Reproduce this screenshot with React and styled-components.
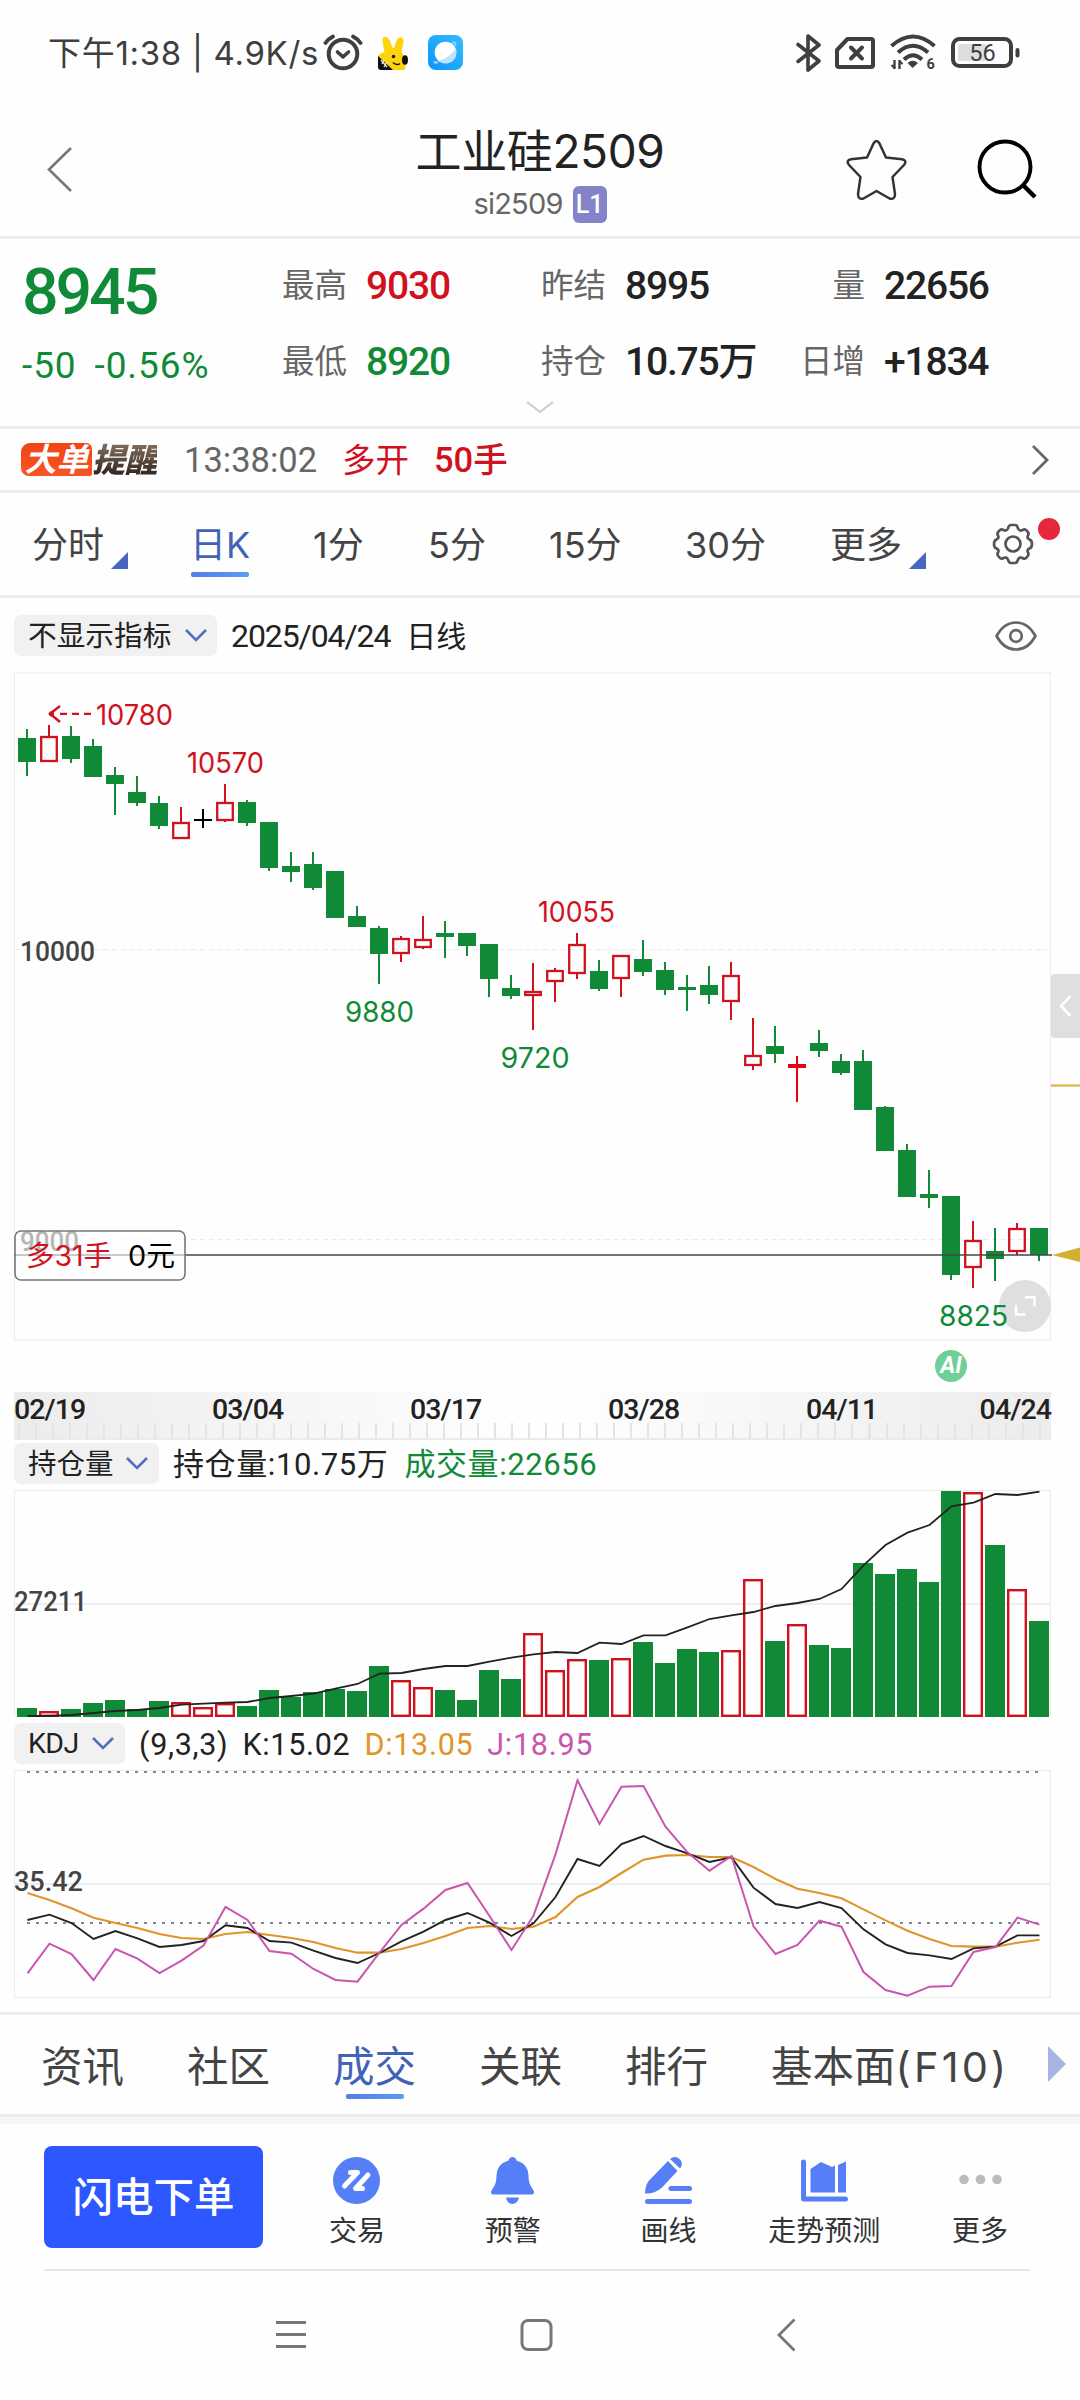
import React from "react";
import styled, { createGlobalStyle } from "styled-components";

const GREEN = "#118a38";
const RED = "#d0121f";
const INK = "#222";
const UI = '"Inter", "Noto Sans CJK SC", sans-serif';
const DIN = '"Roboto", "Noto Sans CJK SC", sans-serif';

const GlobalStyle = createGlobalStyle`
  * { box-sizing: border-box; }
  body { margin: 0; background: #fefefe; }
  svg { display: block; flex: none; }
`;

const Screen = styled.main`
  width: 1080px;
  height: 2400px;
  overflow: hidden;
  display: flex;
  flex-direction: column;
  background: #fefefe;
  color: ${INK};
  font-family: ${UI};
`;

const Text = styled.span`
  flex: none;
  white-space: pre;
  font-family: ${(p) => (p.$din ? DIN : UI)};
  font-size: ${(p) => p.$size}px;
  line-height: ${(p) => p.$lh || 40}px;
  font-weight: ${(p) => p.$weight || 400};
  letter-spacing: ${(p) => p.$ls || 0}px;
  color: ${(p) => p.$color || INK};
  text-align: ${(p) => p.$align || "left"};
  width: ${(p) => (p.$w ? p.$w + "px" : "auto")};
`;

const Spaced = styled.span`
  letter-spacing: 3.2px;
`;

const Divider = styled.hr`
  flex: none;
  width: 100%;
  height: 3px;
  margin: 0;
  border: 0;
  background: #ececec;
`;

/* ---------- status bar ---------- */

const StatusBar = styled.header`
  height: 105px;
  display: flex;
  align-items: center;
  justify-content: space-between;
  padding: 0 60px 0 48px;
`;

const StatusLeft = styled.div`
  display: flex;
  align-items: center;
`;

const StatusIcons = styled.div`
  display: flex;
  align-items: center;
`;

/* ---------- title ---------- */

const TitleBar = styled.div`
  height: 131px;
  display: grid;
  grid-template-columns: 280px 520px 280px;
`;

const BackSlot = styled.div`
  padding: 40px 0 0 46px;
`;

const TitleBlock = styled.div`
  display: flex;
  flex-direction: column;
  align-items: center;
  padding-top: 18px;
`;

const CodeLine = styled.div`
  display: flex;
  align-items: center;
  gap: 10px;
  height: 38px;
  margin-top: 6px;
`;

const LevelTag = styled.span`
  width: 34px;
  height: 37px;
  border-radius: 6px;
  background: #8483c8;
  color: #fff;
  font: 500 25px/37px ${DIN};
  text-align: center;
`;

const TitleActions = styled.div`
  display: flex;
  gap: 70px;
  padding: 34px 0 0 45px;
`;

/* ---------- quote ---------- */

const Quote = styled.section`
  height: 187px;
  display: grid;
  grid-template-columns: 259px 777px;
  grid-template-rows: 160px 27px;
  padding-left: 22px;
`;

const PriceBox = styled.div`
  display: flex;
  flex-direction: column;
  padding-top: 18px;
`;

const ChangeLine = styled.div`
  display: flex;
  gap: 18px;
  margin-top: 9px;
`;

const Stats = styled.dl`
  display: grid;
  grid-template-columns: 259px 242px 276px;
  grid-template-rows: 76px 76px;
  margin: 0;
  padding-top: 9px;
`;

const Stat = styled.div`
  display: flex;
  align-items: center;
  gap: 19px;
`;

const Expander = styled.div`
  grid-column: 1 / -1;
  padding: 2px 0 0 504px;
`;

/* ---------- large order alert ---------- */

const Alert = styled.section`
  height: 61px;
  display: flex;
  align-items: center;
  padding: 0 30px 0 21px;
`;

const AlertBrand = styled.div`
  display: flex;
  align-items: center;
  width: 163px;
  height: 34px;
`;

const BrandHot = styled.span`
  width: 71px;
  height: 33px;
  border-radius: 9px 6px 2px 8px;
  background: linear-gradient(#f04414, #fb5424);
  color: #fff;
  font: italic 700 32px/33px ${UI};
  text-align: center;
`;

const BrandCool = styled.span`
  font: italic 900 33px/34px ${UI};
  letter-spacing: -0.5px;
  color: transparent;
  background: linear-gradient(#85705f, #2d211b);
  background-clip: text;
`;

const Grow = styled.span`
  flex: 1;
`;

/* ---------- tabs ---------- */

const PeriodTabs = styled.nav`
  height: 102px;
  display: grid;
  grid-template-columns: 162px 120px 114px 122px 136px 144px 160px 122px;
`;

const PeriodTab = styled.div`
  display: flex;
  align-items: flex-start;
  padding: 32px 0 0 ${(p) => p.$left || 32}px;
`;

const TabStack = styled.div`
  display: flex;
  flex-direction: column;
  align-items: center;
`;

const Underline = styled.i`
  width: 58px;
  height: 5px;
  border-radius: 2px;
  margin-top: ${(p) => p.$gap}px;
  background: linear-gradient(90deg, #567be9, #5a9df2);
`;

const Corner = styled.i`
  width: 17px;
  height: 17px;
  margin: 27px 0 0 7px;
  background: #4766c0;
  clip-path: polygon(100% 0, 100% 100%, 0 100%);
`;

const Settings = styled.div`
  display: flex;
  padding: 25px 0 0 34px;

  svg {
    margin-top: 5px;
  }
`;

const Dot = styled.i`
  width: 22px;
  height: 22px;
  border-radius: 50%;
  margin-left: 4px;
  background: #e6283c;
`;

/* ---------- indicator headers ---------- */

const IndicatorRow = styled.div`
  flex: none;
  height: ${(p) => p.$h}px;
  padding: ${(p) => p.$top}px 43px 0 14px;
  display: flex;
  align-items: flex-start;
`;

const Picker = styled.div`
  flex: none;
  width: ${(p) => p.$w}px;
  height: 41px;
  display: flex;
  align-items: center;
  justify-content: space-between;
  padding: 0 ${(p) => p.$pr || 11}px 0 ${(p) => p.$pl || 14}px;
  margin-right: 14px;
  border-radius: 7px;
  background: #f1f1f1;
`;

const Legend = styled.div`
  flex: 1;
  display: flex;
  align-items: center;
  gap: ${(p) => p.$gap || 16}px;
  height: 41px;
  padding-top: ${(p) => p.$drop || 0}px;
`;

/* ---------- date axis ---------- */

const AxisGap = styled.div`
  flex: none;
  height: 51px;
  padding: 9px 0 0 935px;
`;

const AiBadge = styled.span`
  display: block;
  width: 32px;
  height: 32px;
  border-radius: 50%;
  background: #6fcf97;
  color: #fff;
  font: italic 700 23px/32px ${DIN};
  text-align: center;
`;

const DateAxis = styled.div`
  flex: none;
  width: 1037px;
  height: 48px;
  margin-left: 14px;
  border-bottom: 2px solid #ebebeb;
  background: linear-gradient(90deg, #ececec, #fefefe 48%, #fefefe 54%, #ececec);
`;

const DateLabels = styled.div`
  height: 31px;
  display: grid;
  grid-template-columns: 198px 198px 198px 198px 1fr auto;
`;

const Ticks = styled.div`
  height: 16px;
  margin-left: 4px;
  background: repeating-linear-gradient(90deg, #e4e4e4 0 2px, transparent 2px 17.01px);
`;

/* ---------- bottom ---------- */

const Spacer = styled.div`
  flex: none;
  height: 14px;
`;

const SectionTabs = styled.nav`
  flex: none;
  height: 99px;
  display: flex;
  gap: 63px;
  padding: 27px 0 0 41px;
`;

const ScrollHint = styled.div`
  margin: 4px 0 0 -24px;
`;

const Shade = styled.div`
  flex: none;
  height: 7px;
  background: #f4f6f8;
`;

const ActionBar = styled.section`
  flex: none;
  height: 147px;
  margin: 0 50px 0 44px;
  border-bottom: 2px solid #e6e6e6;
  display: flex;
`;

const OrderButton = styled.button`
  flex: none;
  width: 219px;
  height: 102px;
  margin-top: 22px;
  border: 0;
  padding: 2px 0 0;
  border-radius: 8px;
  background: #2e58ff;
  color: #fff;
  font: 500 40.5px/60px ${UI};
`;

const Actions = styled.div`
  flex: none;
  width: 779px;
  margin-left: 16px;
  display: grid;
  grid-template-columns: repeat(5, 1fr);
`;

const Action = styled.div`
  display: flex;
  flex-direction: column;
  align-items: center;
  padding-top: 33px;
  gap: 7px;
`;

const SystemNav = styled.footer`
  flex: none;
  height: 129px;
  display: flex;
  align-items: flex-start;
  padding: 46px 0 0 275px;
`;

const Slot = styled.span`
  flex: none;
  width: ${(p) => p.$w}px;
`;

/* ---------- data ---------- */

// high, top of body, bottom of body, low in thirds of a pixel, then kind
const CANDLES = [
  [171, 198, 269, 312, "g"], [159, 192, 269, 269, "r"], [162, 192, 261, 273, "g"], [201, 222, 315, 315, "g"],
  [285, 309, 336, 429, "g"], [312, 360, 393, 402, "g"], [372, 393, 462, 471, "g"], [405, 450, 501, 501, "r"],
  [411, 441, 447, 468, "k"], [336, 390, 447, 450, "r"], [384, 390, 453, 462, "g"], [450, 450, 588, 597, "g"],
  [540, 582, 600, 630, "g"], [540, 576, 648, 654, "g"], [597, 597, 738, 738, "g"], [702, 732, 765, 765, "g"],
  [762, 768, 846, 936, "g"], [792, 798, 846, 870, "r"], [732, 801, 828, 831, "r"], [747, 783, 795, 858, "g"],
  [783, 783, 822, 852, "g"], [816, 816, 921, 975, "g"], [909, 948, 972, 981, "g"], [873, 957, 972, 1074, "r"],
  [888, 894, 930, 990, "r"], [783, 816, 906, 921, "r"], [864, 897, 951, 957, "g"], [849, 849, 921, 975, "r"],
  [804, 861, 900, 912, "g"], [870, 894, 954, 969, "g"], [909, 945, 954, 1017, "g"], [882, 939, 969, 996, "g"],
  [870, 909, 990, 1044, "r"], [1038, 1149, 1182, 1194, "r"], [1062, 1122, 1146, 1173, "g"], [1152, 1176, 1188, 1290, "s"],
  [1074, 1113, 1137, 1155, "g"], [1146, 1167, 1203, 1209, "g"], [1134, 1167, 1314, 1314, "g"], [1302, 1305, 1437, 1437, "g"],
  [1416, 1434, 1575, 1575, "g"], [1494, 1566, 1578, 1608, "g"], [1572, 1572, 1809, 1824, "g"], [1647, 1704, 1788, 1848, "r"],
  [1668, 1737, 1761, 1827, "g"], [1653, 1668, 1740, 1749, "r"], [1668, 1668, 1749, 1767, "g"],
];

const VOLUME = [
  27, 18, 24, 42, 51, 24, 48, 45, 30, 42, 33, 81, 60, 75, 84, 78, 153, 111, 90, 81, 51, 141, 114, 252, 141, 174, 171, 176,
  225, 162, 203, 195, 201, 414, 228, 279, 216, 207, 462, 429, 443, 405, 678, 675, 516, 383, 288,
];
const VOLUME_UP = [1, 7, 8, 9, 17, 18, 23, 24, 25, 27, 32, 33, 35, 43, 45];

const OPEN_INTEREST = [
  3, 3, 6, 12, 18, 21, 27, 37, 40, 43, 45, 57, 63, 70, 85, 99, 130, 132, 144, 153, 153, 166, 178, 188, 195, 192, 223, 219,
  245, 245, 269, 294, 305, 315, 333, 342, 354, 384, 455, 516, 553, 576, 632, 643, 669, 666, 676,
];

const K = [
  450, 434, 459, 507, 483, 505, 531, 525, 513, 466, 474, 513, 518, 542, 564, 579, 549, 514, 485, 450, 429, 458, 498, 460,
  381, 267, 288, 222, 198, 228, 250, 276, 262, 353, 402, 414, 396, 414, 478, 523, 549, 556, 567, 535, 530, 496, 496,
];
const D = [
  369, 390, 415, 443, 459, 474, 492, 504, 507, 492, 486, 495, 504, 516, 534, 548, 548, 537, 519, 498, 474, 468, 477, 470,
  441, 381, 351, 309, 269, 257, 255, 261, 261, 291, 327, 356, 369, 385, 418, 451, 482, 507, 528, 530, 530, 518, 509,
];
const J = [
  610, 521, 552, 630, 537, 566, 609, 572, 527, 411, 450, 543, 551, 597, 630, 635, 548, 465, 416, 360, 339, 438, 540, 437,
  253, 31, 162, 50, 48, 170, 247, 302, 258, 469, 552, 525, 452, 470, 606, 660, 677, 650, 648, 546, 531, 443, 464,
];

const points = (list, y) => list.map((v, i) => `${27.5 + 22 * i},${y(v)}`).join(" ");

/* ---------- charts ---------- */

const Candle = ({ i, data }) => {
  const [h, t, b, l, kind] = data;
  const x = 18 + 22 * i;
  const y = (v) => Math.round(v / 3);
  const color = { g: GREEN, r: RED, s: "#e60012", k: "#000" }[kind];
  const hollow = kind === "r";
  return (
    <g>
      <rect x={x + 8} y={y(h)} width="2" height={(hollow ? y(t) : y(l)) - y(h)} fill={color} />
      {hollow ? (
        <>
          <rect x={x + 8} y={y(b)} width="2" height={y(l) - y(b)} fill={color} />
          <rect x={x + 1.2} y={y(t) + 1} width="15.6" height={Math.max(y(b) - y(t) - 2, 2)} fill="none" stroke={color} strokeWidth="2.3" />
        </>
      ) : (
        <rect x={x} y={y(t)} width="18" height={Math.max(y(b) - y(t), 2)} fill={color} />
      )}
    </g>
  );
};

const Note = ({ x, y, color, children }) => (
  <text x={x} y={y} fill={color} fontFamily={UI} fontSize="28.5" textLength={children.length === 5 ? 77 : 69} lengthAdjust="spacingAndGlyphs">
    {children}
  </text>
);

const Scale = ({ x, y, w, children }) => (
  <text x={x} y={y} fill="#444" fontFamily={DIN} fontSize="28.5" fontWeight="500" textLength={w} lengthAdjust="spacingAndGlyphs">
    {children}
  </text>
);

const PriceChart = () => (
  <svg width="1080" height="669" viewBox="0 0 1080 669">
    <path d="M14 1H1051M14 668H1051" stroke="#f3f3f4" strokeWidth="2" />
    <path d="M14.5 0V669M1050.5 0V669" stroke="#ececf0" />
    <path d="M15 277.5H1051M15 567.5H1051" stroke="#ecebf2" strokeDasharray="5 3.8" />
    <Scale x="20" y="288.5" w="75">10000</Scale>
    <Scale x="20" y="578.5" w="59">9000</Scale>
    {CANDLES.map((c, i) => <Candle key={i} i={i} data={c} />)}
    <path d="M14 583H1052" stroke="#444" strokeWidth="1.4" />
    <rect x="15" y="559" width="170" height="49" rx="6" fill="#fefefe" fillOpacity="0.62" stroke="#777" strokeWidth="1.6" />
    <text x="26" y="593.5" fill={RED} fontFamily={UI} fontSize="28" textLength="86" lengthAdjust="spacingAndGlyphs">多31手</text>
    <text x="128" y="593.5" fill="#000" fontFamily={UI} fontSize="28" textLength="47" lengthAdjust="spacingAndGlyphs">0元</text>
    <path d="M60 34L50 41.8L60 50" fill="none" stroke={RED} strokeWidth="2.4" />
    <path d="M60 41.8H91" stroke={RED} strokeWidth="2.2" strokeDasharray="7 5" />
    <circle cx="51.5" cy="41.8" r="2.6" fill={RED} />
    <Note x="96" y="52.5" color={RED}>10780</Note>
    <Note x="187" y="100.5" color={RED}>10570</Note>
    <Note x="538" y="250" color={RED}>10055</Note>
    <Note x="345" y="349.5" color={GREEN}>9880</Note>
    <Note x="500.5" y="395.5" color={GREEN}>9720</Note>
    <circle cx="1025" cy="634" r="26" fill="#dfdfdf" />
    <path d="M1025 625.2H1034.5V634.5M1016 633V642.5H1025.5" fill="none" stroke="#fff" strokeWidth="2.4" />
    <Note x="939" y="653.5" color={GREEN}>8825</Note>
    <path d="M1080 302H1055Q1051 302 1051 306V362Q1051 366 1055 366H1080Z" fill="#dfdfdf" />
    <path d="M1070.5 324L1061 334L1070.5 344" fill="none" stroke="#fff" strokeWidth="2.6" />
    <path d="M1051 413.5H1080" stroke="#d5b548" strokeWidth="2.2" />
    <path d="M1052 583L1080 575.5V590Z" fill="#d2b030" />
  </svg>
);

const VolumeChart = () => (
  <svg width="1080" height="227" viewBox="0 0 1080 227">
    <path d="M14.5 227V.5H1050.5V227" fill="none" stroke="#ebebed" />
    <path d="M15 114H1050" stroke="#eceef1" strokeWidth="2" />
    <Scale x="14" y="121" w="73">27211</Scale>
    {VOLUME.map((v, i) => {
      const h = Math.round(v / 3);
      return VOLUME_UP.includes(i) ? (
        <rect key={i} x={18.2 + 22 * i} y={228.2 - h} width="17.6" height={Math.max(h - 2.4, 2)} fill="none" stroke={RED} strokeWidth="2.4" />
      ) : (
        <rect key={i} x={17 + 22 * i} y={227 - h} width="20" height={h} fill={GREEN} />
      );
    })}
    <polyline points={points(OPEN_INTEREST, (v) => 227 - v / 3)} fill="none" stroke={INK} strokeWidth="1.8" />
  </svg>
);

const KdjChart = () => (
  <svg width="1080" height="228" viewBox="0 0 1080 228">
    <rect x="14.5" y=".5" width="1036" height="227" fill="none" stroke="#ebebed" />
    <path d="M15 114H1050" stroke="#eceef1" strokeWidth="2" />
    <path d="M27 2H1040M27 153H1040" stroke="#7d8795" strokeWidth="2" strokeDasharray="3 6" />
    <Scale x="14" y="121" w="69">35.42</Scale>
    <polyline points={points(D, (v) => v / 3)} fill="none" stroke="#e0942a" strokeWidth="2.1" />
    <polyline points={points(K, (v) => v / 3)} fill="none" stroke={INK} strokeWidth="1.9" />
    <polyline points={points(J, (v) => v / 3)} fill="none" stroke="#c956ac" strokeWidth="2" />
  </svg>
);

/* ---------- icons ---------- */

const AlarmIcon = () => (
  <svg width="40" height="38" viewBox="0 0 40 38" fill="none" stroke="#3f3f3f" strokeLinecap="round">
    <circle cx="20" cy="20" r="14.3" strokeWidth="4" />
    <path d="M14.5 18L20 22.8L25.5 18" strokeWidth="3.6" strokeLinejoin="round" />
    <path d="M2.5 9Q5 5 10 2.5M37.5 9Q35 5 30 2.5" strokeWidth="3.8" />
  </svg>
);

const RabbitIcon = () => (
  <svg width="34" height="34" viewBox="0 0 34 34">
    <path d="M4.500 5.500C3.500 -1 10 -.5 12.500 6L14.500 12H16L18 6C20 -.5 26.500 0 25.500 6.500L23.500 16Q29 22 27 34H13L0 22V20Q3 16 6.500 16.500Z" fill="#fdd30c" />
    <path d="M0 20L15 34H3Q0 34 0 31Z" fill="#111" />
    <circle cx="15.500" cy="20.500" r="1.700" fill="#111" />
    <ellipse cx="27" cy="24" rx="3" ry="4.800" fill="#111" />
    <path d="M15 26.500Q19 30 22 27.500" fill="none" stroke="#111" strokeWidth="1.300" />
    <path d="M3 24L9 31M6 24L4 28M9 26L6 31" stroke="#eee" strokeWidth="1.200" />
  </svg>
);

const BrowserIcon = () => (
  <svg width="35" height="35" viewBox="0 0 35 35">
    <defs>
      <linearGradient id="sky" x1="1" y1="0" x2="0" y2="1">
        <stop offset="0" stopColor="#33bdfb" />
        <stop offset="1" stopColor="#0a96fb" />
      </linearGradient>
    </defs>
    <rect width="35" height="35" rx="8" fill="url(#sky)" />
    <path d="M7 26Q5 29 10 27M24 8Q29 6 27 11" stroke="#8fd0fd" strokeWidth="2" fill="none" />
    <circle cx="17.500" cy="17.500" r="10.800" fill="#fff" />
    <path d="M28 13Q30 25 20 28Q15 29 11 26Q21 23 28 13Z" fill="#bfe3fd" />
  </svg>
);

const BluetoothIcon = () => (
  <svg width="26" height="40" viewBox="0 0 26 40" fill="none" stroke="#3f3f3f" strokeWidth="3.600" strokeLinejoin="round" strokeLinecap="round">
    <path d="M2 11.500L23 28L12 37V3L23 12L2 28.500" />
  </svg>
);

const NoSimIcon = () => (
  <svg width="40" height="32" viewBox="0 0 40 32" fill="none" stroke="#3f3f3f">
    <path d="M12.500 2H36Q38 2 38 4V28Q38 30 36 30H4Q2 30 2 28V13Z" strokeWidth="4" strokeLinejoin="round" />
    <path d="M16 10.500L27 21.500M27 10.500L16 21.500" strokeWidth="4" strokeLinecap="round" />
  </svg>
);

const WifiIcon = () => (
  <svg width="46" height="38" viewBox="0 0 46 38" fill="none" stroke="#3f3f3f" strokeWidth="4">
    <path d="M1.500 12Q23 -7 44.500 12M8 18.500Q23 5 38 18.500M14 25.500Q23 17 32 25.500" />
    <path d="M17.500 29Q22.500 24.500 28 29L22.700 34Z" fill="#3f3f3f" stroke="none" />
    <path d="M4.500 26V35M9.500 26V35" strokeWidth="2.400" />
    <path d="M1.500 31L4.500 34M9.500 27L12.500 30" strokeWidth="2" />
    <text x="36.500" y="35" fontFamily={DIN} fontSize="14.500" fontWeight="700" fill="#3f3f3f" stroke="none">6</text>
  </svg>
);

const BatteryIcon = () => (
  <svg width="69" height="32" viewBox="0 0 69 32">
    <rect x="2" y="2" width="58" height="27" rx="6.500" fill="none" stroke="#3f3f3f" strokeWidth="4" />
    <rect x="7" y="7" width="28" height="17" rx="2" fill="#dedede" />
    <rect x="64.500" y="11" width="4" height="9.500" rx="2" fill="#3f3f3f" />
    <text x="31.500" y="23.800" textAnchor="middle" fontFamily={DIN} fontSize="23.500" fill="#3f3f3f">56</text>
  </svg>
);

const BackIcon = () => (
  <svg width="27" height="48" viewBox="0 0 27 48" fill="none" stroke="#777" strokeWidth="2.600">
    <path d="M25 3L3 24.500L25 46" />
  </svg>
);

const StarIcon = () => (
  <svg width="62" height="62" viewBox="0 0 62 62" fill="none" stroke="#333" strokeWidth="2.500" strokeLinejoin="round">
    <path d="M28.500 4.500Q31.500 -.5 34.500 4.500L41 18.500L57 20.300Q62.500 21.500 59 26L47.500 38L50 55Q50 61 44.500 59.500L31.500 52L18.500 59.500Q13 61 13 55L15.500 38L4 26Q.5 21.500 6 20.300L22 18.500Z" />
  </svg>
);

const SearchIcon = () => (
  <svg width="62" height="62" viewBox="0 0 62 62" fill="none" stroke="#000" strokeWidth="3.900">
    <circle cx="28" cy="28" r="25.500" />
    <path d="M46 46L58 58" strokeWidth="4.500" />
  </svg>
);

const Chevron = ({ w, h, color, sw = 2 }) => (
  <svg width={w} height={h} viewBox={`0 0 ${w} ${h}`} fill="none" stroke={color} strokeWidth={sw}>
    <path d={`M1 1L${w / 2} ${h - 2}L${w - 1} 1`} />
  </svg>
);

const RightIcon = () => (
  <svg width="19" height="32" viewBox="0 0 19 32" fill="none" stroke="#666" strokeWidth="2.800">
    <path d="M2 2L16 16L2 30" />
  </svg>
);

const GearIcon = () => (
  <svg width="42" height="42" viewBox="0 0 42 42" fill="none" stroke="#555" strokeWidth="2.700" strokeLinejoin="round">
    <path d="M16 5.500Q16.800 2 19 2H23Q25.200 2 26 5.500Q27.500 8.500 30.500 7Q33 5.500 34.500 7.500Q37.500 10 36 12.500Q34.500 15 37.500 16.500Q40 17.500 40 21T37.500 25.500Q34.500 27 36 29.500Q37.500 32 34.500 34.500Q33 36.500 30.500 35Q27.500 33.500 26 36.500Q25.200 40 23 40H19Q16.800 40 16 36.500Q14.500 33.500 11.500 35Q9 36.500 7.500 34.500Q4.500 32 6 29.500Q7.500 27 4.500 25.500Q2 24.500 2 21T4.500 16.500Q7.500 15 6 12.500Q4.500 10 7.500 7.500Q9 5.500 11.500 7Q14.500 8.500 16 5.500Z" />
    <circle cx="21" cy="21" r="7.500" />
  </svg>
);

const EyeIcon = () => (
  <svg width="42" height="30" viewBox="0 0 42 30" fill="none" stroke="#666" strokeWidth="2.700">
    <path d="M1.500 15Q9 1.500 21 1.500T40.500 15Q33 28.500 21 28.500T1.500 15Z" />
    <circle cx="21" cy="15" r="5.800" />
  </svg>
);

const BLUE = "#567ef7";

const TradeIcon = () => (
  <svg width="47" height="47" viewBox="0 0 47 47">
    <circle cx="23.500" cy="23.500" r="23.500" fill={BLUE} />
    <path d="M17.500 15.500H24.500L11.500 29M35 18L22.500 31.500H29.500" fill="none" stroke="#fff" strokeWidth="5" strokeLinecap="round" strokeLinejoin="round" />
  </svg>
);

const BellIcon = () => (
  <svg width="47" height="47" viewBox="0 0 47 47" fill={BLUE}>
    <path d="M19.500 3.500Q20.500 0 23.500 0T27.500 3.500Q39 7 39.500 18Q39.500 25 41.500 28.500L44.500 33.500Q46 37.500 42 37.500H5Q1 37.500 2.500 33.500L5.500 28.500Q7.500 25 7.500 18Q8 7 19.500 3.500Z" />
    <path d="M17 40.500H30Q28.500 47 23.500 47T17 40.500Z" />
  </svg>
);

const DrawIcon = () => (
  <svg width="47" height="47" viewBox="0 0 47 47" fill={BLUE}>
    <path d="M23 4L32.500 14L17 30.500Q10 37 0 36.500Q0 27 5.500 22Z" />
    <path d="M25 2Q30 -2 34.500 2T35 11.500Z" />
    <rect x="23.500" y="29" width="23.500" height="5" rx="2.500" />
    <rect y="42" width="47" height="5" rx="2.500" />
  </svg>
);

const ForecastIcon = () => (
  <svg width="47" height="47" viewBox="0 0 47 47" fill={BLUE}>
    <path d="M0 5Q0 2.500 2.500 2.500T5 5V39.500H44.500Q47 39.500 47 42T44.500 44.500H3Q0 44.500 0 41.500Z" />
    <path d="M9.500 12L20 5L31 10L34 8.500V35.500H9.500Z" />
    <path d="M37 8L45 4.500V35.500H37Z" />
  </svg>
);

const MoreIcon = () => (
  <svg width="47" height="47" viewBox="0 0 47 47" fill="#bbb">
    <circle cx="7" cy="22.500" r="4.800" />
    <circle cx="23.500" cy="22.500" r="4.800" />
    <circle cx="40" cy="22.500" r="4.800" />
  </svg>
);

/* ---------- page ---------- */

const STATS = [
  ["最高", "9030", RED], ["昨结", "8995", INK], ["量", "22656", INK],
  ["最低", "8920", GREEN], ["持仓", "10.75万", INK], ["日增", "+1834", INK],
];

const SECTIONS = [["资讯"], ["社区"], ["成交"], ["关联"], ["排行"], ["基本面", "(F10)"]];

const ACTIONS = [
  ["交易", TradeIcon], ["预警", BellIcon], ["画线", DrawIcon], ["走势预测", ForecastIcon], ["更多", MoreIcon],
];

const DATES = ["02/19", "03/04", "03/17", "03/28", "04/11", "04/24"];

export default function App() {
  return (
    <Screen>
      <GlobalStyle />
      <StatusBar>
        <StatusLeft>
          <Text $size={33} $ls={0.700} $lh={42} $color="#3f3f3f" $w={275}>下午1:38 | 4.9K/s</Text>
          <AlarmIcon />
          <Slot $w={15} />
          <RabbitIcon />
          <Slot $w={16} />
          <BrowserIcon />
        </StatusLeft>
        <StatusIcons>
          <BluetoothIcon />
          <Slot $w={13} />
          <NoSimIcon />
          <Slot $w={15} />
          <WifiIcon />
          <Slot $w={15} />
          <BatteryIcon />
        </StatusIcons>
      </StatusBar>

      <TitleBar>
        <BackSlot><BackIcon /></BackSlot>
        <TitleBlock>
          <Text $size={46} $lh={56} $ls={-0.400}>工业硅2509</Text>
          <CodeLine>
            <Text $size={29} $color="#666" $ls={-0.800}>si2509</Text>
            <LevelTag>L1</LevelTag>
          </CodeLine>
        </TitleBlock>
        <TitleActions>
          <StarIcon />
          <SearchIcon />
        </TitleActions>
      </TitleBar>
      <Divider />

      <Quote>
        <PriceBox>
          <Text $din $size={64.500} $lh={70} $weight={500} $ls={-3.100} $color={GREEN}>8945</Text>
          <ChangeLine>
            <Text $din $size={37} $lh={60} $ls={0.900} $color={GREEN}>-50</Text>
            <Text $din $size={37} $lh={60} $ls={0.900} $color={GREEN}>-0.56%</Text>
          </ChangeLine>
        </PriceBox>
        <Stats>
          {STATS.map(([label, value, color], i) => (
            <Stat key={label}>
              <Text $size={32.500} $color="#666" $w={i % 3 === 2 ? 83 : 66} $align="right">{label}</Text>
              <Text $din $size={39} $weight={500} $ls={-1.200} $color={color}>{value}</Text>
            </Stat>
          ))}
        </Stats>
        <Expander><Chevron w={28} h={13} color="#ccc" /></Expander>
      </Quote>
      <Divider />

      <Alert>
        <AlertBrand>
          <BrandHot>大单</BrandHot>
          <BrandCool>提醒</BrandCool>
        </AlertBrand>
        <Text $din $size={34.500} $color="#666" $w={158}>13:38:02</Text>
        <Text $size={33.500} $color={RED} $w={92}>多开</Text>
        <Text $din $size={34.500} $weight={500} $color={RED}>50手</Text>
        <Grow />
        <RightIcon />
      </Alert>
      <Divider />

      <PeriodTabs>
        <PeriodTab><Text $size={36} $color="#444">分时</Text><Corner /></PeriodTab>
        <PeriodTab $left={28}>
          <TabStack>
            <Text $size={36} $color="#4262b8">日K</Text>
            <Underline $gap={7} />
          </TabStack>
        </PeriodTab>
        <PeriodTab $left={31}><Text $size={36} $color="#444">1分</Text></PeriodTab>
        <PeriodTab $left={32}><Text $size={36} $color="#444">5分</Text></PeriodTab>
        <PeriodTab $left={31}><Text $size={36} $color="#444">15分</Text></PeriodTab>
        <PeriodTab $left={31}><Text $size={36} $color="#444">30分</Text></PeriodTab>
        <PeriodTab $left={32}><Text $size={36} $color="#444">更多</Text><Corner /></PeriodTab>
        <Settings><GearIcon /><Dot /></Settings>
      </PeriodTabs>
      <Divider />

      <IndicatorRow $h={74} $top={17}>
        <Picker $w={203} $pr={10}>
          <Text $size={28.700}>不显示指标</Text>
          <Chevron w={22} h={13} color="#5470bd" sw={2.600} />
        </Picker>
        <Legend>
          <Text $din $size={32} $ls={-1.100}>2025/04/24</Text>
          <Text $size={30}>日线</Text>
          <Grow />
          <EyeIcon />
        </Legend>
      </IndicatorRow>
      <PriceChart />

      <AxisGap><AiBadge>AI</AiBadge></AxisGap>
      <DateAxis>
        <DateLabels>
          {DATES.map((d) => <Text key={d} $din $size={28.500} $lh={35} $ls={-0.900} $weight={500}>{d}</Text>)}
        </DateLabels>
        <Ticks />
      </DateAxis>

      <IndicatorRow $h={50} $top={3}>
        <Picker $w={145}>
          <Text $size={28.500}>持仓量</Text>
          <Chevron w={22} h={13} color="#5470bd" sw={2.600} />
        </Picker>
        <Legend $drop={2}>
          <Text $din $size={31} $ls={0.600}>持仓量:10.75万</Text>
          <Text $din $size={31} $ls={0.600} $color={GREEN}>成交量:22656</Text>
        </Legend>
      </IndicatorRow>
      <VolumeChart />

      <IndicatorRow $h={53} $top={6}>
        <Picker $w={111}>
          <Text $din $size={28.500} $ls={-0.600}>KDJ</Text>
          <Chevron w={22} h={13} color="#5470bd" sw={2.600} />
        </Picker>
        <Legend $drop={2} $gap={14}>
          <Text $din $size={30.500} $ls={0.700}>(9,3,3)</Text>
          <Text $din $size={30.500} $ls={0.700}>K:15.02</Text>
          <Text $din $size={30.500} $ls={0.700} $color="#e0942a">D:13.05</Text>
          <Text $din $size={30.500} $ls={0.700} $color="#c956ac">J:18.95</Text>
        </Legend>
      </IndicatorRow>
      <KdjChart />
      <Spacer />
      <Divider />

      <SectionTabs>
        {SECTIONS.map(([name, suffix]) => (
          <TabStack key={name}>
            <Text $size={41.500} $lh={50} $color={name === "成交" ? "#4262b8" : "#444"}>
              {name}
              {suffix && <Spaced>{suffix}</Spaced>}
            </Text>
            {name === "成交" && <Underline $gap={2} />}
          </TabStack>
        ))}
        <ScrollHint>
          <svg width="18" height="36" viewBox="0 0 18 36"><path d="M0 0L18 18L0 36Z" fill="#a5b4e3" /></svg>
        </ScrollHint>
      </SectionTabs>
      <Divider />
      <Shade />

      <ActionBar>
        <OrderButton>闪电下单</OrderButton>
        <Actions>
          {ACTIONS.map(([label, Icon]) => (
            <Action key={label}>
              <Icon />
              <Text $size={28} $color="#333">{label}</Text>
            </Action>
          ))}
        </Actions>
      </ActionBar>

      <SystemNav>
        <Slot $w={244}>
          <svg width="32" height="36" viewBox="0 0 32 36" stroke="#777" strokeWidth="3"><path d="M1 5.500H31M1 17.500H31M1 29.500H31" /></svg>
        </Slot>
        <Slot $w={257}>
          <svg width="34" height="36" viewBox="0 0 34 36" fill="none" stroke="#777" strokeWidth="3"><rect x="3" y="3.500" width="29" height="29" rx="6" /></svg>
        </Slot>
        <Slot $w={20}>
          <svg width="20" height="36" viewBox="0 0 20 36" fill="none" stroke="#777" strokeWidth="2.800"><path d="M18.500 2.500L3 18L18.500 33.500" /></svg>
        </Slot>
      </SystemNav>
    </Screen>
  );
}
